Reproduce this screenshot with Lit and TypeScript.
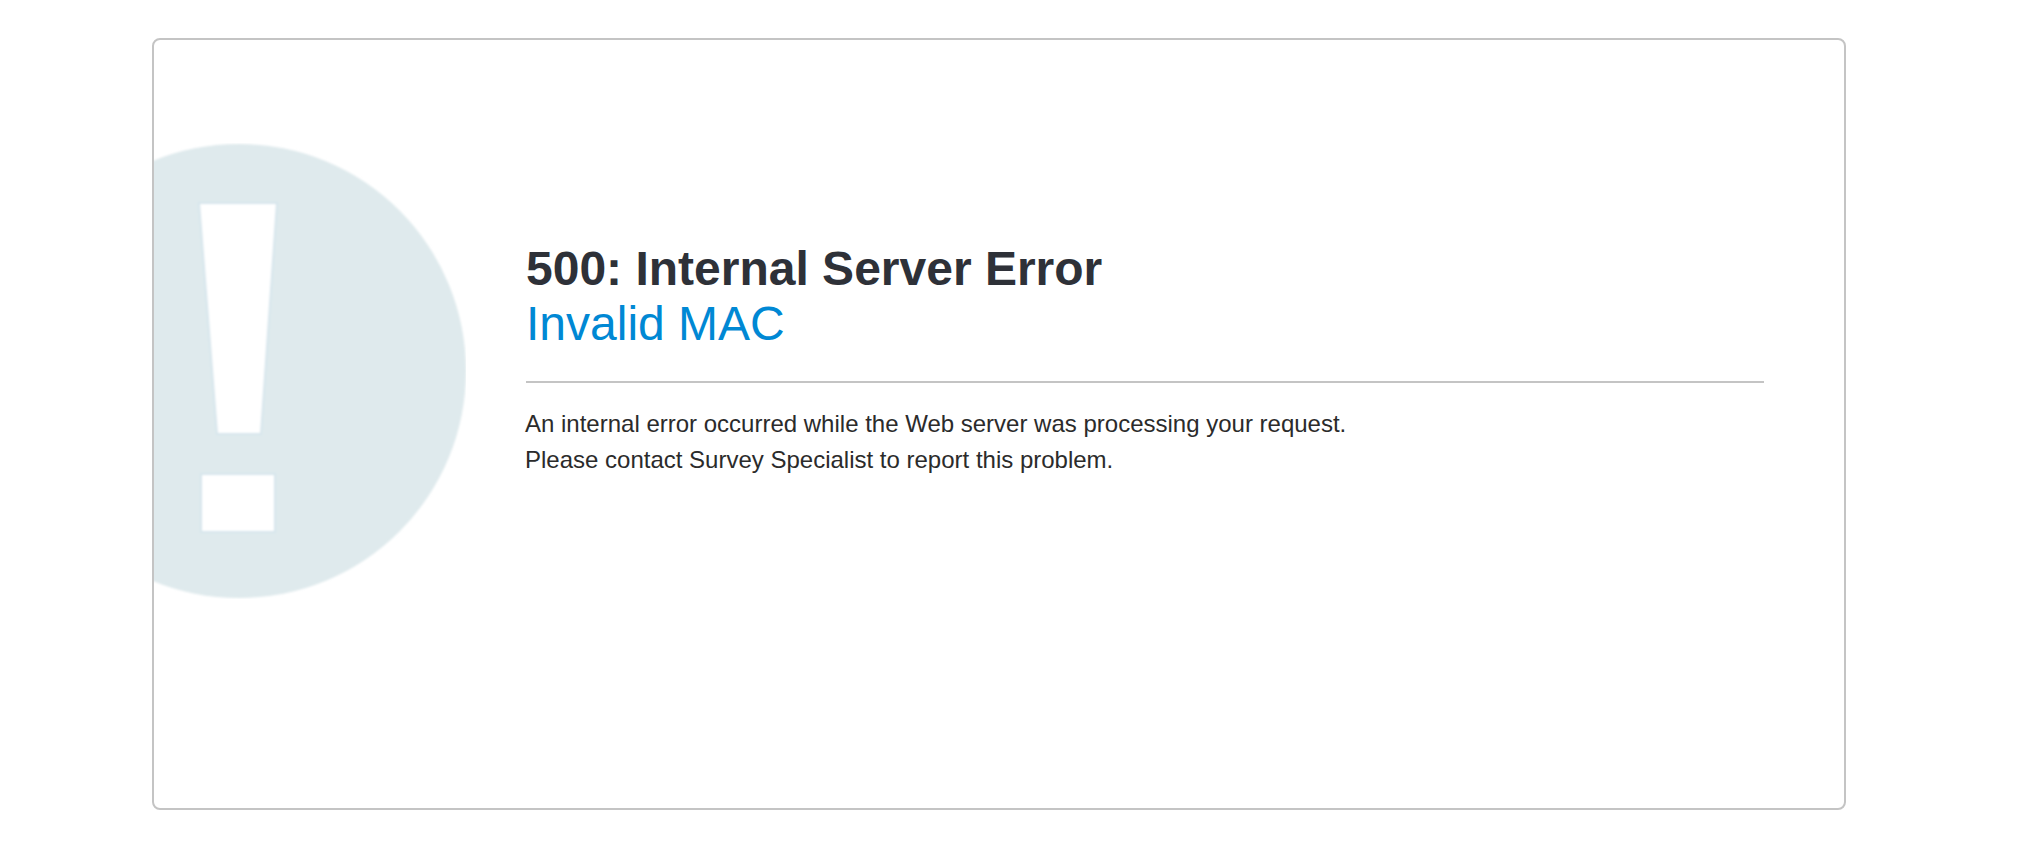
import {LitElement, html, css} from 'lit';
import {customElement} from 'lit/decorators.js';

@customElement('app-root')
export class AppRoot extends LitElement {
    static override styles = css`
        :host {
            display: block;
            min-height: 866px;
            background: #fff;
            font-family: 'Liberation Sans', Arial, sans-serif;
            box-sizing: border-box;
            padding: 38px 0 0 152px;
        }

        .card {
            width: 1694px;
            height: 772px;
            box-sizing: border-box;
            border: 2px solid #c4c4c4;
            border-radius: 8px;
            display: flex;
            align-items: flex-start;
            overflow: hidden;
        }

        .icon {
            flex: none;
            display: block;
            width: 312px;
            height: 456px;
            margin-top: 103px;
        }

        .content {
            flex: 1;
            margin: 201px 80px 0 60px;
        }

        h1 {
            margin: 0;
            font-size: 48px;
            line-height: 55px;
            font-weight: 700;
            color: #2e3138;
        }

        h2 {
            margin: 0;
            font-size: 48px;
            line-height: 56px;
            font-weight: 400;
            color: #0088d4;
        }

        hr {
            margin: 29px 0 23px;
            border: 0;
            border-top: 2px solid #c4c4c4;
        }

        p {
            margin: 0 0 0 -1px;
            font-size: 24px;
            line-height: 36px;
            color: #2b2b2b;
        }
    `;

    override render() {
        return html`
            <div class="card">
                <svg class="icon" viewBox="154 143 312 456" aria-hidden="true">
                    <defs>
                        <filter id="soft" x="-5%" y="-5%" width="110%" height="110%">
                            <feGaussianBlur stdDeviation="0.85" />
                        </filter>
                    </defs>
                    <g filter="url(#soft)">
                        <circle cx="239" cy="371" r="227" fill="#dfeaed" />
                        <path
                            d="M199 203H277L261 434H217Z"
                            fill="#fff"
                            stroke="#d6e5ec"
                            stroke-width="2"
                        />
                        <rect
                            x="201"
                            y="474"
                            width="74"
                            height="58"
                            fill="#fff"
                            stroke="#d6e5ec"
                            stroke-width="2"
                        />
                    </g>
                </svg>
                <div class="content">
                    <h1>500: Internal Server Error</h1>
                    <h2>Invalid MAC</h2>
                    <hr />
                    <p>An internal error occurred while the Web server was processing your request.</p>
                    <p>Please contact Survey Specialist to report this problem.</p>
                </div>
            </div>
        `;
    }
}

declare global {
    interface HTMLElementTagNameMap {
        'app-root': AppRoot;
    }
}
